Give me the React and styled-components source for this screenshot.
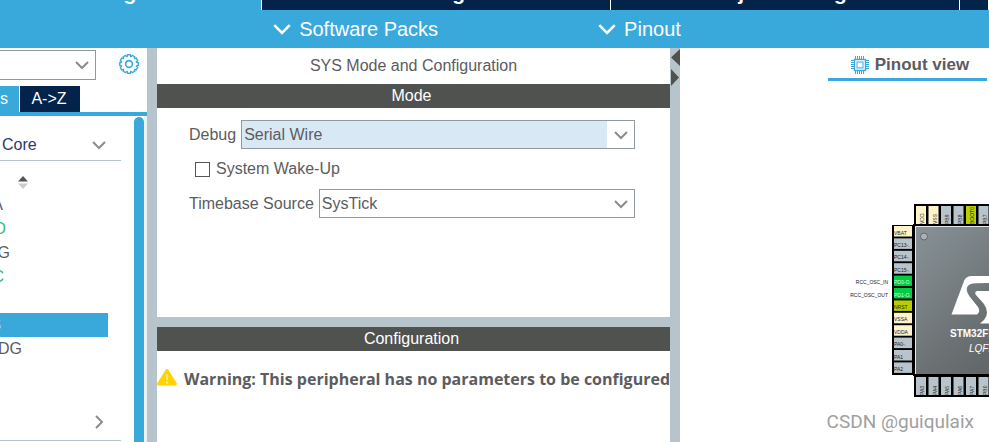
import React from 'react';
import styled, { createGlobalStyle } from 'styled-components';

const colors = {
  navy: '#03234b',
  blue: '#39a9dc',
  steel: '#b8c4cb',
  dark: '#505250',
  text: '#5c5c60',
  green: '#3cb878',
};

const GlobalStyle = createGlobalStyle`
  * {
    box-sizing: border-box;
  }

  body {
    margin: 0;
    background: white;
    color: ${colors.text};
    font-family: 'Liberation Sans', Arial, sans-serif;
    font-size: 16px;
    line-height: 24px;
    overflow: hidden;
  }

  button,
  select {
    font: inherit;
    color: inherit;
  }
`;

const Page = styled.div`
  display: flex;
  flex-direction: column;
  height: 100vh;
`;

const MainTabs = styled.nav`
  display: grid;
  grid-template-columns: 262fr 349fr 349fr 29fr;
  grid-template-rows: 10px;
  flex: none;
  overflow: hidden;
`;

const MainTab = styled.button`
  display: flex;
  align-items: flex-end;
  justify-content: center;
  align-self: end;
  min-width: 0;
  height: 32px;
  padding: ${({ $active }) => ($active ? '0 76px 7px 0' : '0 0 7px')};
  border: 0;
  border-right: 1px solid white;
  background: ${({ $active }) => ($active ? colors.blue : colors.navy)};
  color: white;
  font-size: 21px;
  font-weight: bold;
  line-height: 20px;
  white-space: nowrap;
`;

const MenuBar = styled.div`
  display: flex;
  flex: none;
  justify-content: center;
  gap: 160px;
  height: 38px;
  padding-right: 35px;
  background: ${colors.blue};
`;

const MenuButton = styled.button`
  display: flex;
  align-items: center;
  gap: 8px;
  padding: 0;
  border: 0;
  background: none;
  color: white;
  font-size: 20px;
`;

const Workspace = styled.div`
  display: grid;
  grid-template-columns: 147px 10px 513fr 10px 309fr;
  flex: 1;
  min-height: 0;
`;

const Divider = styled.div`
  background: ${colors.steel};
`;

const Sidebar = styled.aside`
  display: flex;
  flex-direction: column;
  min-width: 0;
  background: white;
  overflow: hidden;
`;

const SearchRow = styled.div`
  display: flex;
  align-items: flex-start;
  gap: 22px;
  padding-top: 2px;
`;

const SelectBox = styled.div`
  display: grid;
  grid-template-columns: 1fr 27px;
  align-items: center;
  flex: 1;
  height: ${({ $tall }) => ($tall ? '30px' : '29px')};
  border: 1px solid #90999f;
  border-left-width: ${({ $tall }) => ($tall ? 0 : '1px')};

  select {
    grid-area: 1 / 1 / 2 / 3;
    width: 100%;
    height: 100%;
    padding: 0 2px;
    border: 0;
    border-radius: 0;
    outline: 0;
    appearance: none;
    background: ${({ $filled }) => ($filled ? '#d9e8f5' : 'white')};
  }
`;

const Arrow = styled.span`
  grid-area: 1 / 2 / 2 / 3;
  display: grid;
  place-items: center;
  height: 100%;
  background: white;
  pointer-events: none;
`;

const IconButton = styled.button`
  display: flex;
  padding: 3px 0 0;
  margin-right: 7px;
  border: 0;
  background: none;
`;

const ViewTabs = styled.div`
  display: flex;
  gap: 1px;
  margin-top: 6px;
  border-bottom: 4px solid ${colors.blue};
`;

const ViewTab = styled.button`
  width: ${({ $active }) => ($active ? '19px' : '60px')};
  height: 26px;
  padding: 0;
  padding-right: ${({ $active }) => ($active ? '15px' : '2px')};
  border: 0;
  background: ${({ $active }) => ($active ? colors.blue : colors.navy)};
  color: white;
`;

const SidebarBody = styled.div`
  display: flex;
  flex: 1;
  gap: 13px;
`;

const Categories = styled.div`
  flex: 1;
`;

const Category = styled.button`
  display: flex;
  align-items: center;
  justify-content: space-between;
  width: 121px;
  height: ${({ $open }) => ($open ? '45px' : '37px')};
  padding: ${({ $open }) => ($open ? '14px 15px 0 2px' : '0 15px 0 2px')};
  border: 0;
  border-bottom: 1px solid ${colors.steel};
  background: none;
  color: #2e3871;
`;

const SortIcon = styled.svg`
  display: block;
  margin: 15px 0 4px 18px;
`;

const Peripherals = styled.ul`
  width: 108px;
  height: 211px;
  margin: 0;
  padding: 0;
  list-style: none;
`;

const Peripheral = styled.li`
  display: flex;
  justify-content: flex-end;
  height: 24px;
  padding-right: ${({ $end }) => 108 - $end}px;
  background: ${({ $selected }) => ($selected ? colors.blue : 'none')};
  color: ${({ $tone }) => $tone || colors.text};
  white-space: nowrap;
`;

const ScrollTrack = styled.div`
  display: flex;
  width: 13px;
  padding-top: 1px;
  background: linear-gradient(to right, white 10px, #eef0f1 10px);
`;

const ScrollThumb = styled.div`
  width: 10px;
  border-radius: 5px 5px 0 0;
  background: ${colors.blue};
`;

const Center = styled.main`
  display: flex;
  flex-direction: column;
  min-width: 0;
`;

const PanelTitle = styled.h1`
  margin: 0;
  padding: 6px 0;
  font-size: 16px;
  font-weight: normal;
  text-align: center;
`;

const SectionTitle = styled.h2`
  margin: 0;
  padding-right: 4px;
  background: ${colors.dark};
  color: white;
  font-size: 16px;
  font-weight: normal;
  text-align: center;
`;

const ModeForm = styled.form`
  display: flex;
  flex-direction: column;
  height: 209px;
  padding: 12px 35px 0 32px;
`;

const Field = styled.div`
  display: flex;
  align-items: center;
  gap: 5px;
`;

const CheckField = styled.label`
  display: flex;
  align-items: center;
  gap: 6px;
  height: 40px;
  padding-left: 6px;

  input {
    width: 15px;
    height: 15px;
    margin: 0;
    appearance: none;
    border: 1px solid #555;
    background: white;
  }
`;

const Configuration = styled.section`
  flex: 1;
  border-top: 10px solid ${colors.steel};
`;

const Warning = styled.p`
  display: flex;
  align-items: center;
  gap: 6px;
  margin: 16px 0 0;
  font-family: 'Open Sans', 'Liberation Sans', sans-serif;
  font-weight: bold;
  white-space: nowrap;
`;

const PinoutPanel = styled.section`
  display: flex;
  flex-direction: column;
  align-items: flex-end;
  min-width: 0;
`;

const PinoutTab = styled.button`
  display: flex;
  align-items: center;
  justify-content: center;
  gap: 6px;
  width: 159px;
  height: 33px;
  margin-right: 2px;
  padding: 4px 0 0 5px;
  border: 0;
  border-bottom: 3px solid ${colors.blue};
  background: none;
  font-size: 17px;
  font-weight: bold;
`;

const Chip = styled.svg`
  display: block;
  margin-top: 121px;
  font-family: 'Liberation Sans', Arial, sans-serif;
`;

const Watermark = styled.footer`
  margin: 12px 15px 0 0;
  color: #a0a0a0;
  font-family: Roboto, sans-serif;
  font-size: 19px;
`;

const Chevron = ({ size = 14, stroke = 2, color = '#8c8c8c' }) => (
  <svg width={size} height={size} viewBox="0 0 14 14" fill="none" aria-hidden="true">
    <path d="M1 4l6 6 6-6" stroke={color} strokeWidth={stroke} />
  </svg>
);

const ChevronRight = () => (
  <svg width="14" height="14" viewBox="0 0 14 14" fill="none" aria-hidden="true">
    <path d="M4 1l6 6-6 6" stroke="#8c8c8c" strokeWidth="2" />
  </svg>
);

const Gear = () => (
  <svg width="22" height="22" viewBox="-11 -11 22 22" fill="none" stroke={colors.blue} aria-hidden="true">
    {Array.from({ length: 12 }, (_, i) => (
      <path
        key={i}
        d="M-2.200 -7.200Q-1.600 -7.600 -1.400 -9.200H1.400Q1.600 -7.600 2.200 -7.200"
        strokeWidth="1.4"
        transform={`rotate(${i * 30})`}
      />
    ))}
    <circle r="3.4" strokeWidth="1.6" />
  </svg>
);

const ChipIcon = () => (
  <svg width="18" height="18" viewBox="0 0 18 18" fill="none" stroke={colors.blue} aria-hidden="true">
    <path d="M4.5 0v3M6.5 0v3M8.5 0v3M10.5 0v3M12.5 0v3M4.5 15v3M6.5 15v3M8.5 15v3M10.5 15v3M12.5 15v3M0 4.5h3M0 6.5h3M0 8.5h3M0 10.5h3M0 12.5h3M15 4.5h3M15 6.5h3M15 8.5h3M15 10.5h3M15 12.5h3" />
    <rect x="3.5" y="3.5" width="11" height="11" strokeWidth="1.4" />
    <rect x="6" y="6" width="6" height="6" />
  </svg>
);

const WarningIcon = () => (
  <svg width="21" height="20" viewBox="0 0 21 20" aria-hidden="true">
    <path d="M10 1.500L18.500 15H1.500z" fill="#ffd200" stroke="#ffd200" strokeWidth="3" strokeLinejoin="round" />
    <path d="M10 5v6M10 12.500v2" stroke="#fff3b0" strokeWidth="1.600" />
  </svg>
);

const pinColors = {
  power: '#fff3cc',
  io: '#b8c4cb',
  used: '#00cc44',
  reset: '#bbcc00',
};

const leftPins = [
  ['VBAT', 'power'],
  ['PC13-.', 'io'],
  ['PC14-.', 'io'],
  ['PC15-.', 'io'],
  ['PD0-O.', 'used', 'RCC_OSC_IN'],
  ['PD1-O.', 'used', 'RCC_OSC_OUT'],
  ['NRST', 'reset'],
  ['VSSA', 'power'],
  ['VDDA', 'power'],
  ['PA0-.', 'io'],
  ['PA1', 'io'],
  ['PA2', 'io'],
];

const topPins = [
  ['VDD', 'power'],
  ['VSS', 'power'],
  ['PB9', 'io'],
  ['PB8', 'io'],
  ['BOOT0', 'reset'],
  ['PB7', 'io'],
];

const bottomPins = ['PA3', 'PA4', 'PA5', 'PA6', 'PA7', 'PB0'];

const ColumnPin = ({ x, y, label, kind }) => (
  <g transform={`translate(${x} ${y})`}>
    <rect width="12" height="20" fill={pinColors[kind]} stroke="black" strokeWidth="2" />
    <text transform="translate(9 19) rotate(-90)" fontSize="5" fill="#222">{label}</text>
  </g>
);

const ChipView = () => (
  <Chip width="149" height="196" viewBox="840 202 149 196" role="img" aria-label="STM32 pinout">
    <defs>
      <linearGradient id="body" x1="0" y1="0" x2="1" y2="1">
        <stop offset="0" stopColor="#899398" />
        <stop offset="0.5" stopColor="#6c7375" />
        <stop offset="1" stopColor="#555958" />
      </linearGradient>
    </defs>
    <rect x="892" y="225" width="22" height="150" fill="black" />
    {leftPins.map(([label, kind, signal], i) => (
      <g key={label} transform={`translate(894 ${226 + i * 12.4})`}>
        <rect width="18" height="10.500" fill={pinColors[kind]} />
        <text x="0" y="8.500" fontSize="5" fill={kind === 'used' ? '#d8ffe0' : '#222'}>{label}</text>
        {signal && <text x="-6" y="8.500" fontSize="5" textAnchor="end" fill="#222">{signal}</text>}
      </g>
    ))}
    {topPins.map(([label, kind], i) => (
      <ColumnPin key={label} x={915 + i * 12.5} y={205} label={label} kind={kind} />
    ))}
    {bottomPins.map((label, i) => (
      <ColumnPin key={label} x={915 + i * 12.5} y={376} label={label} kind="io" />
    ))}
    <rect x="914" y="225" width="150" height="150" fill="url(#body)" stroke="black" strokeWidth="2" />
    <path d="M915.500 374V226.500H989" fill="none" stroke="#e5e8e9" />
    <circle cx="924" cy="236.500" r="3.500" fill="#a8b2b8" stroke="#626a6e" />
    <path d="M989 276H972Q966 276 964 281L951.500 314.500H977Q981 312 978 307L970 297Q963 287 971 284Q973 283 989 283z" fill="white" />
    <path d="M989 291H977Q974 292 976 295L984 304Q990 313 984 320L980 323.500H989z" fill="white" />
    <text x="950" y="337" fontSize="10" fontWeight="bold" fill="white">STM32F103</text>
    <text x="969" y="352" fontSize="10" fontStyle="italic" fill="white">LQFP48</text>
  </Chip>
);

const Splitter = () => (
  <Divider>
    <svg width="10" height="40" viewBox="0 0 10 40" fill="#505250" aria-hidden="true">
      <path d="M10 1v17L1 9.500zM1 21v17l8-8.500z" />
    </svg>
  </Divider>
);

const App = () => (
  <>
    <GlobalStyle />
    <Page>
      <MainTabs>
        <MainTab $active>Pinout &amp; Configuration</MainTab>
        <MainTab>Clock Configuration</MainTab>
        <MainTab>Project Manager</MainTab>
        <MainTab aria-label="Tools" />
      </MainTabs>
      <MenuBar>
        <MenuButton><Chevron size={18} stroke={2} color="white" />Software Packs</MenuButton>
        <MenuButton><Chevron size={18} stroke={2} color="white" />Pinout</MenuButton>
      </MenuBar>
      <Workspace>
        <Sidebar>
          <SearchRow>
            <SelectBox $tall>
              <select aria-label="Search" />
              <Arrow><Chevron /></Arrow>
            </SelectBox>
            <IconButton aria-label="Settings"><Gear /></IconButton>
          </SearchRow>
          <ViewTabs>
            <ViewTab $active>s</ViewTab>
            <ViewTab>A-&gt;Z</ViewTab>
          </ViewTabs>
          <SidebarBody>
            <Categories>
              <Category $open>Core<Chevron /></Category>
              <SortIcon width="10" height="13" viewBox="0 0 10 13" aria-hidden="true">
                <path d="M0 5.500L5 0l5 5.500z" fill="#555" />
                <path d="M0 7.500L5 13l5-5.500z" fill="#ccc" />
              </SortIcon>
              <Peripherals>
                <Peripheral $end={3}>DMA</Peripheral>
                <Peripheral $end={6} $tone={colors.green}>GPIO</Peripheral>
                <Peripheral $end={10}>IWDG</Peripheral>
                <Peripheral $end={4} $tone={colors.green}>NVIC</Peripheral>
                <Peripheral $end={0}>RCC</Peripheral>
                <Peripheral $end={1} $tone="white" $selected>SYS</Peripheral>
                <Peripheral $end={22}>WWDG</Peripheral>
              </Peripherals>
              <Category aria-label="Analog"><span /><ChevronRight /></Category>
            </Categories>
            <ScrollTrack><ScrollThumb /></ScrollTrack>
          </SidebarBody>
        </Sidebar>
        <Divider />
        <Center>
          <PanelTitle>SYS Mode and Configuration</PanelTitle>
          <SectionTitle>Mode</SectionTitle>
          <ModeForm>
            <Field>
              <label htmlFor="debug">Debug</label>
              <SelectBox $filled>
                <select id="debug"><option>Serial Wire</option></select>
                <Arrow><Chevron /></Arrow>
              </SelectBox>
            </Field>
            <CheckField><input type="checkbox" />System Wake-Up</CheckField>
            <Field>
              <label htmlFor="timebase">Timebase Source</label>
              <SelectBox>
                <select id="timebase"><option>SysTick</option></select>
                <Arrow><Chevron /></Arrow>
              </SelectBox>
            </Field>
          </ModeForm>
          <Configuration>
            <SectionTitle>Configuration</SectionTitle>
            <Warning><WarningIcon />Warning: This peripheral has no parameters to be configured</Warning>
          </Configuration>
        </Center>
        <Splitter />
        <PinoutPanel>
          <PinoutTab><ChipIcon />Pinout view</PinoutTab>
          <ChipView />
          <Watermark>CSDN @guiqulaix</Watermark>
        </PinoutPanel>
      </Workspace>
    </Page>
  </>
);

export default App;
